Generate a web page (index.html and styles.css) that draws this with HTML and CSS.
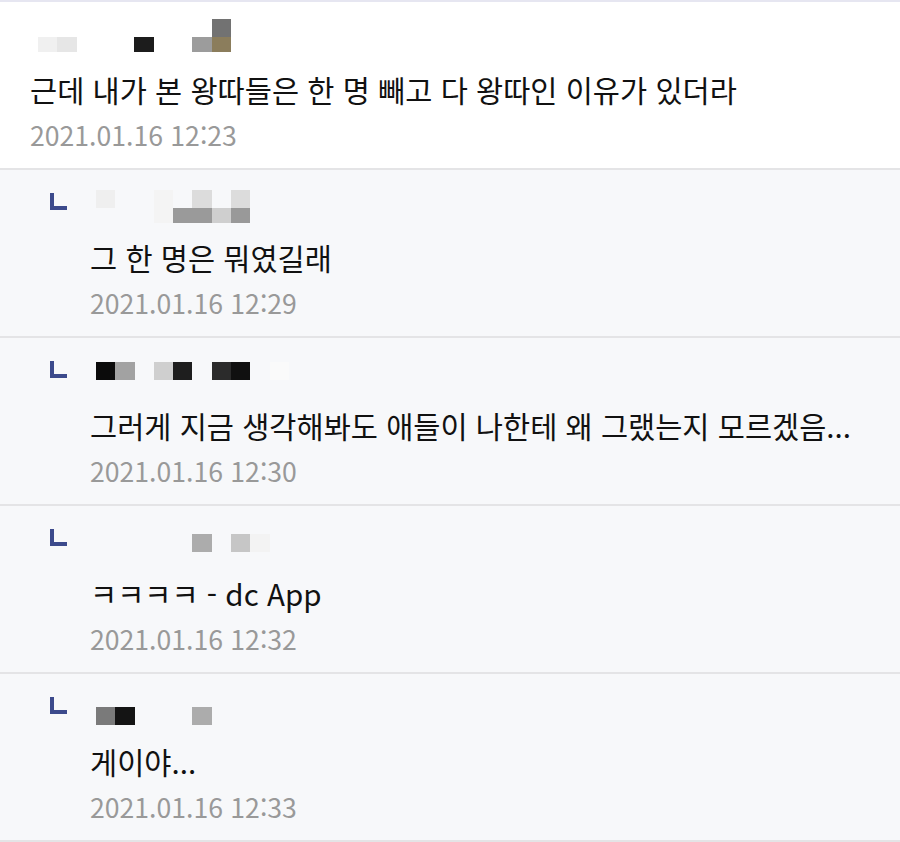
FILE: index.html
```html
<!DOCTYPE html>
<html lang="ko">
<head>
    <meta charset="UTF-8">
    <meta name="viewport" content="width=device-width, initial-scale=1.0">
    <title>댓글</title>
    <link rel="stylesheet" href="styles.css">
</head>
<body>
    <ul class="comment-list">
        <li class="comment">
            <div class="nick">
                <div class="mosaic" style="margin-top:17px">
                    <span style="grid-area:1/10;background:#727272"></span>
                    <span style="grid-area:2/1;background:#f0f0f0"></span>
                    <span style="grid-area:2/2;background:#e6e6e6"></span>
                    <span style="grid-area:2/6;background:#1c1c1c"></span>
                    <span style="grid-area:2/9;background:#9c9c9c"></span>
                    <span style="grid-area:2/10;background:#8b7d5c"></span>
                </div>
            </div>
            <p class="text">근데 내가 본 왕따들은 한 명 빼고 다 왕따인 이유가 있더라</p>
            <p class="date">2021.01.16 12:23</p>
        </li>

        <li class="comment reply">
            <span class="reply-mark"></span>
            <div class="reply-body">
                <div class="nick">
                    <div class="mosaic" style="margin-top:20px">
                        <span style="grid-area:1/1;background:#efefef"></span>
                        <span style="grid-area:1/4/3/5;background:#f4f4f4"></span>
                        <span style="grid-area:1/6;background:#dcdcdc"></span>
                        <span style="grid-area:1/8;background:#dcdcdc"></span>
                        <span style="grid-area:2/5/3/7;background:#9a9a9a"></span>
                        <span style="grid-area:2/7;background:#cfcfcf"></span>
                        <span style="grid-area:2/8;background:#999"></span>
                    </div>
                </div>
                <p class="text">그 한 명은 뭐였길래</p>
                <p class="date">2021.01.16 12:29</p>
            </div>
        </li>

        <li class="comment reply">
            <span class="reply-mark"></span>
            <div class="reply-body">
                <div class="nick">
                    <div class="mosaic" style="margin-top:24px">
                        <span style="grid-area:1/1;background:#0b0b0b"></span>
                        <span style="grid-area:1/2;background:#a2a2a2"></span>
                        <span style="grid-area:1/4;background:#cfcfcf"></span>
                        <span style="grid-area:1/5;background:#1e1e1e"></span>
                        <span style="grid-area:1/7;background:#2b2b2b"></span>
                        <span style="grid-area:1/8;background:#101010"></span>
                        <span style="grid-area:1/10;background:#fafafa"></span>
                    </div>
                </div>
                <p class="text">그러게 지금 생각해봐도 애들이 나한테 왜 그랬는지 모르겠음...</p>
                <p class="date">2021.01.16 12:30</p>
            </div>
        </li>

        <li class="comment reply">
            <span class="reply-mark"></span>
            <div class="reply-body">
                <div class="nick">
                    <div class="mosaic" style="margin-top:28px">
                        <span style="grid-area:1/6;background:#acacac"></span>
                        <span style="grid-area:1/8;background:#c6c6c6"></span>
                        <span style="grid-area:1/9;background:#f3f3f3"></span>
                    </div>
                </div>
                <p class="text">ㅋㅋㅋㅋ - dc App</p>
                <p class="date">2021.01.16 12:32</p>
            </div>
        </li>

        <li class="comment reply">
            <span class="reply-mark"></span>
            <div class="reply-body">
                <div class="nick">
                    <div class="mosaic" style="margin-top:33px">
                        <span style="grid-area:1/1;background:#7a7a7a"></span>
                        <span style="grid-area:1/2;background:#141414"></span>
                        <span style="grid-area:1/6;background:#acacac"></span>
                    </div>
                </div>
                <p class="text">게이야...</p>
                <p class="date">2021.01.16 12:33</p>
            </div>
        </li>
    </ul>
</body>
</html>
```

FILE: styles.css
```css
body {
    margin: 0;
    padding: 0;
    background-color: #f7f8fa;
    font-family: "Noto Sans CJK KR", "Noto Sans", sans-serif;
    color: #111;
}
.comment-list {
    list-style: none;
    margin: 0;
    padding: 0;
    border-top: 2px solid #e6e6f1;
}
.comment {
    height: 166px;
    padding-left: 30px;
    background-color: #fff;
    border-bottom: 2px solid #e4e4e6;
}
.comment.reply {
    display: flex;
    padding-left: 50px;
    background-color: #f7f8fa;
}
.reply-mark {
    width: 13px;
    height: 13px;
    margin-top: 23px;
    margin-right: 23px;
    border-left: 4px solid #3c4a8c;
    border-bottom: 4px solid #3c4a8c;
    flex-shrink: 0;
}
.reply-body {
    flex-grow: 1;
}
.nick {
    height: 67px;
    overflow: hidden;
}
.comment:first-child .nick {
    margin-left: 8px;
}
.reply .nick {
    margin-left: 6px;
}
.mosaic {
    display: grid;
    grid-template-columns: repeat(13, 19.3px);
    grid-template-rows: 18px 15px;
}
.mosaic span {
    display: block;
}
.text {
    margin: 0;
    font-size: 29.5px;
    line-height: 40px;
    white-space: nowrap;
}
.date {
    margin: 0;
    font-size: 26.6px;
    line-height: 52px;
    color: #999;
}
```
